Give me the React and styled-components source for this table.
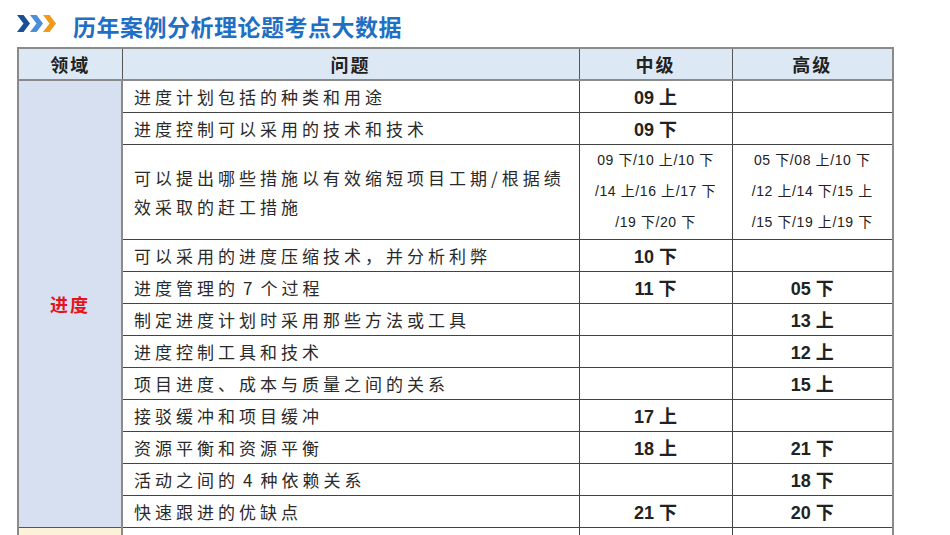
import React from "react";
import styled, { createGlobalStyle } from "styled-components";

const GlobalStyle = createGlobalStyle`
  html, body {
    margin: 0;
    padding: 0;
    background: #ffffff;
    font-family: "Noto Sans CJK SC", "Noto Sans", sans-serif;
  }
`;

const Page = styled.div`
  width: 950px;
  height: 535px;
  overflow: hidden;
  padding-left: 17px;
  box-sizing: border-box;
`;

const TitleBar = styled.div`
  display: flex;
  align-items: center;
  gap: 16px;
  height: 47px;
`;

const Title = styled.h1`
  margin: 0;
  font-size: 23px;
  font-weight: 700;
  color: #1f6fc4;
  letter-spacing: 0.5px;
  line-height: 1;
  padding-top: 6px;
`;

const Table = styled.table`
  width: 875px;
  table-layout: fixed;
  border-collapse: collapse;
  border: 2px solid #8a8a8a;
  color: #222;
`;

const HeadCell = styled.th`
  height: 30px;
  padding: 0;
  background: #dde8f5;
  border: 1px solid #555;
  border-bottom: 2px solid #8a8a8a;
  font-size: 18px;
  font-weight: 700;
  letter-spacing: 2px;
  text-align: center;
  vertical-align: middle;
`;

const Row = styled.tr`
  height: ${(p) => p.$h || 32}px;
`;

const AreaCell = styled.td`
  background: ${(p) => p.$bg || "#d7e0f1"};
  border: 1px solid #555;
  border-right: 2px solid #8a8a8a;
  color: #e8121a;
  font-size: 18px;
  font-weight: 700;
  letter-spacing: 2px;
  text-align: center;
  vertical-align: middle;
  padding: 0;
`;

const Question = styled.td`
  border: 1px solid #444;
  padding: 0 0 0 11px;
  font-size: 17px;
  letter-spacing: 4px;
  line-height: 29px;
  color: #2a2a2a;
  vertical-align: middle;
  white-space: pre;
  overflow: hidden;
`;

const Num = styled.span`
  margin: 0 4px;
`;

const Year = styled.td`
  border: 1px solid #444;
  padding: 0;
  text-align: center;
  vertical-align: middle;
  font-family: "Liberation Sans", "Noto Sans CJK SC", sans-serif;
  font-size: 18px;
  font-weight: 700;
`;

const YearList = styled.td`
  border: 1px solid #444;
  padding: 0;
  text-align: center;
  vertical-align: middle;
  font-family: "Liberation Sans", "Noto Sans CJK SC", sans-serif;
  font-size: 14px;
  letter-spacing: 0.6px;
  line-height: 31px;
  white-space: pre;
`;

const Chevrons = () => (
  <svg width="40" height="17" viewBox="0 0 40 17">
    <path d="M0 0 L6.5 0 L13 8.5 L6.5 17 L0 17 L6.5 8.5 Z" fill="#1b4f93" />
    <path d="M13 0 L19.5 0 L26 8.5 L19.5 17 L13 17 L19.5 8.5 Z" fill="#4b90d6" />
    <path d="M26 0 L32.5 0 L39 8.5 L32.5 17 L26 17 L32.5 8.5 Z" fill="#f19a17" />
  </svg>
);

const rows = [
  { q: "进度计划包括的种类和用途", mid: "09 上", high: "" },
  { q: "进度控制可以采用的技术和技术", mid: "09 下", high: "" },
  {
    q: "可以提出哪些措施以有效缩短项目工期/根据绩\n效采取的赶工措施",
    mid: "09 下/10 上/10 下\n/14 上/16 上/17 下\n/19 下/20 下",
    high: "05 下/08 上/10 下\n/12 上/14 下/15 上\n/15 下/19 上/19 下",
    list: true,
  },
  { q: "可以采用的进度压缩技术，并分析利弊", mid: "10 下", high: "" },
  { q: ["进度管理的", "7", "个过程"], mid: "11 下", high: "05 下" },
  { q: "制定进度计划时采用那些方法或工具", mid: "", high: "13 上" },
  { q: "进度控制工具和技术", mid: "", high: "12 上" },
  { q: "项目进度、成本与质量之间的关系", mid: "", high: "15 上" },
  { q: "接驳缓冲和项目缓冲", mid: "17 上", high: "" },
  { q: "资源平衡和资源平衡", mid: "18 上", high: "21 下" },
  { q: ["活动之间的", "4", "种依赖关系"], mid: "", high: "18 下" },
  { q: "快速跟进的优缺点", mid: "21 下", high: "20 下" },
];

const QuestionText = ({ q }) =>
  Array.isArray(q) ? (
    <>
      {q[0]}
      <Num>{q[1]}</Num>
      {q[2]}
    </>
  ) : (
    q
  );

export default function App() {
  return (
    <Page>
      <GlobalStyle />
      <TitleBar>
        <Chevrons />
        <Title>历年案例分析理论题考点大数据</Title>
      </TitleBar>
      <Table>
        <colgroup>
          <col style={{ width: 104 }} />
          <col style={{ width: 457 }} />
          <col style={{ width: 153 }} />
          <col style={{ width: 161 }} />
        </colgroup>
        <thead>
          <tr>
            <HeadCell>领域</HeadCell>
            <HeadCell>问题</HeadCell>
            <HeadCell>中级</HeadCell>
            <HeadCell>高级</HeadCell>
          </tr>
        </thead>
        <tbody>
          {rows.map((r, i) => (
            <Row key={i} $h={r.list ? 95 : 32}>
              {i === 0 && <AreaCell rowSpan={rows.length}>进度</AreaCell>}
              <Question>
                <QuestionText q={r.q} />
              </Question>
              {r.list ? (
                <>
                  <YearList>{r.mid}</YearList>
                  <YearList>{r.high}</YearList>
                </>
              ) : (
                <>
                  <Year>{r.mid}</Year>
                  <Year>{r.high}</Year>
                </>
              )}
            </Row>
          ))}
          <Row $h={32}>
            <AreaCell $bg="#fcf2da" />
            <Question />
            <Year />
            <Year />
          </Row>
        </tbody>
      </Table>
    </Page>
  );
}
